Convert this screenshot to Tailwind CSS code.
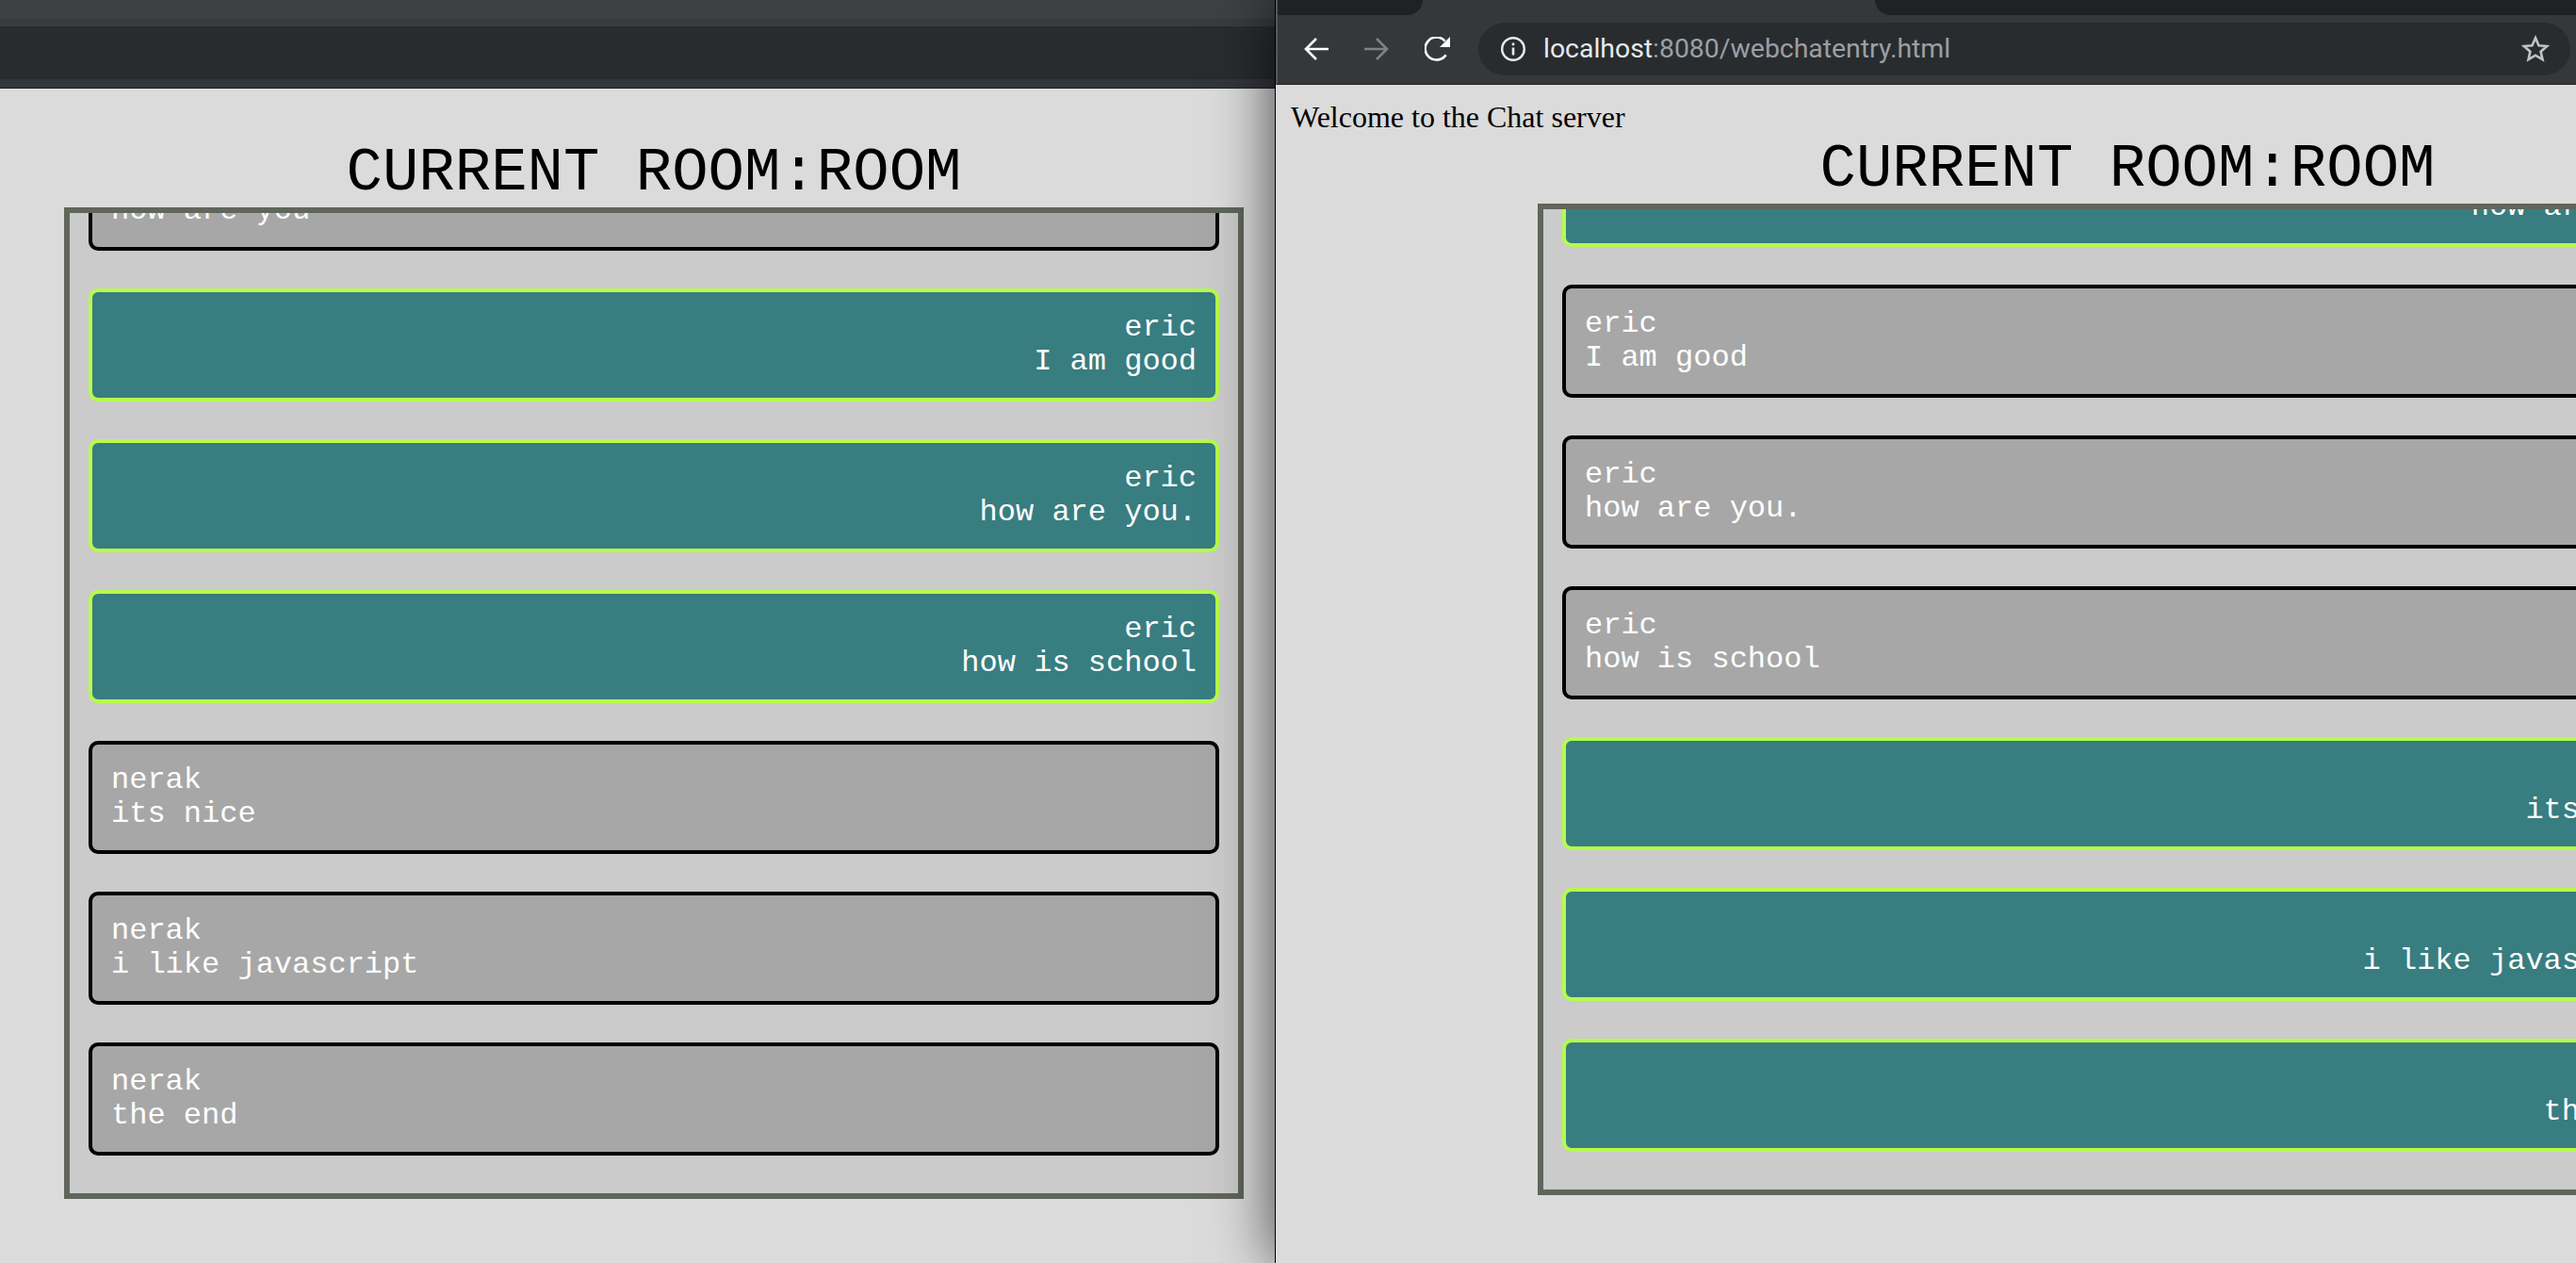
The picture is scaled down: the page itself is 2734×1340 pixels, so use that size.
<!DOCTYPE html>
<html>
  <head>
    <title>Chat</title>
    <script src="https://cdn.jsdelivr.net/npm/@tailwindcss/browser@4"></script>
  </head>
  <body class="bg-[#dbdbdb] overflow-hidden">
    <div class="flex w-[2734px] h-[1340px] overflow-hidden">
      <!-- left window -->
      <div class="w-[1353px] shrink-0 flex flex-col">
        <div class="h-[20px] bg-[#3d4144]"></div>
        <div class="h-[8px] bg-[#383c3f]"></div>
        <div class="h-[56px] bg-[#292c2f]"></div>
        <div class="h-[10px] bg-[#33363a] border-b border-[#202124]"></div>
        <div class="ml-[68px] w-[1252px] pt-[54px]">
          <h1 class="h-[72px] text-center text-[64px] leading-[72px] text-black font-['Liberation_Mono',monospace]">CURRENT ROOM:ROOM</h1>
          <div class="h-[1052px] border-[6px] border-[#60665c] bg-[#cbcbcb] overflow-hidden">
            <div class="flex flex-col gap-[40px] px-[20px] -mt-[80px] text-[32px] leading-[36px] text-white font-['Liberation_Mono',monospace]">
              <div class="h-[120px] p-[20px] border-4 border-black rounded-[10px] bg-[#a7a7a7]"><p>nerak</p><p>how are you</p></div>
              <div class="h-[120px] p-[20px] border-4 border-[#b6fb4c] rounded-[10px] bg-[#387d80] text-right"><p>eric</p><p>I am good</p></div>
              <div class="h-[120px] p-[20px] border-4 border-[#b6fb4c] rounded-[10px] bg-[#387d80] text-right"><p>eric</p><p>how are you.</p></div>
              <div class="h-[120px] p-[20px] border-4 border-[#b6fb4c] rounded-[10px] bg-[#387d80] text-right"><p>eric</p><p>how is school</p></div>
              <div class="h-[120px] p-[20px] border-4 border-black rounded-[10px] bg-[#a7a7a7]"><p>nerak</p><p>its nice</p></div>
              <div class="h-[120px] p-[20px] border-4 border-black rounded-[10px] bg-[#a7a7a7]"><p>nerak</p><p>i like javascript</p></div>
              <div class="h-[120px] p-[20px] border-4 border-black rounded-[10px] bg-[#a7a7a7]"><p>nerak</p><p>the end</p></div>
            </div>
          </div>
        </div>
      </div>

      <!-- right window -->
      <div class="relative z-10 flex-1 min-w-0 flex flex-col border-l border-black bg-[#dbdbdb] shadow-[0_0_60px_rgba(0,0,0,0.7)]">
        <div class="flex h-[16px] shrink-0 bg-[#35383b] border-l-2 border-[#55585b]">
          <div class="w-[154px] bg-[#202124] rounded-br-[16px]"></div>
          <div class="w-[480px]"></div>
          <div class="flex-1 bg-[#202124] rounded-bl-[16px]"></div>
        </div>
        <div class="h-[74px] shrink-0 flex items-start pt-[8px] pl-[28px] pr-[6px] bg-[#35383b] border-l-2 border-l-[#55585b] border-b border-b-[#202124]">
          <div class="h-[56px] flex items-center gap-[38px]">
            <svg class="w-[26px] h-[24px]" viewBox="0 0 26 24" fill="none" stroke="#ffffff" stroke-width="2.6"><path d="M26 12H2M13 1L2 12l11 11"/></svg>
            <svg class="w-[26px] h-[24px]" viewBox="0 0 26 24" fill="none" stroke="#808285" stroke-width="2.6"><path d="M0 12h24M13 1l11 11-11 11"/></svg>
            <svg class="w-[27px] h-[26px]" viewBox="0 0 27 26" fill="none"><path d="M22.6 19.2A12 12 0 1 1 21.6 4.6" stroke="#ffffff" stroke-width="2.6"/><path d="M27 0v11H16z" fill="#ffffff"/></svg>
          </div>
          <div class="ml-[30px] flex-1 h-[56px] flex items-center pl-[24px] pr-[22px] rounded-full bg-[#292c2f]">
            <svg class="w-[26px] h-[26px] shrink-0" viewBox="0 0 26 26" fill="none"><circle cx="13" cy="13" r="11.8" stroke="#e8eaed" stroke-width="2.4"/><path d="M11.7 11.5h2.6v8h-2.6zM11.7 6.6h2.6v2.6h-2.6z" fill="#e8eaed"/></svg>
            <span class="ml-[19px] text-[28.4px] leading-[38px] text-[#e8eaed] font-['Roboto',sans-serif]">localhost<span class="text-[#9aa0a6]">:8080/webchatentry.html</span></span>
            <svg class="ml-auto w-[30px] h-[30px] shrink-0" viewBox="0 0 30 30" fill="none"><path d="M15 3.2l3.5 8 8.6.8-6.5 5.700 1.900 8.500-7.500-4.500-7.500 4.500 1.900-8.500L2.900 12l8.600-.8z" stroke="#c0c4c8" stroke-width="2.6"/></svg>
          </div>
        </div>
        <p class="mt-[16px] ml-[16px] h-[38px] text-[32px] leading-[36px] text-black font-['Liberation_Serif',serif]">Welcome to the Chat server</p>
        <div class="ml-[278px] w-[1252px]">
          <h1 class="h-[72px] text-center text-[64px] leading-[72px] text-black font-['Liberation_Mono',monospace]">CURRENT ROOM:ROOM</h1>
          <div class="h-[1052px] border-[6px] border-[#60665c] bg-[#cbcbcb] overflow-hidden">
            <div class="flex flex-col gap-[40px] px-[20px] -mt-[80px] text-[32px] leading-[36px] text-white font-['Liberation_Mono',monospace]">
              <div class="h-[120px] p-[20px] border-4 border-[#b6fb4c] rounded-[10px] bg-[#387d80] text-right"><p>nerak</p><p>how are you</p></div>
              <div class="h-[120px] p-[20px] border-4 border-black rounded-[10px] bg-[#a7a7a7]"><p>eric</p><p>I am good</p></div>
              <div class="h-[120px] p-[20px] border-4 border-black rounded-[10px] bg-[#a7a7a7]"><p>eric</p><p>how are you.</p></div>
              <div class="h-[120px] p-[20px] border-4 border-black rounded-[10px] bg-[#a7a7a7]"><p>eric</p><p>how is school</p></div>
              <div class="h-[120px] p-[20px] border-4 border-[#b6fb4c] rounded-[10px] bg-[#387d80] text-right"><p>nerak</p><p>its nice</p></div>
              <div class="h-[120px] p-[20px] border-4 border-[#b6fb4c] rounded-[10px] bg-[#387d80] text-right"><p>nerak</p><p>i like javascript</p></div>
              <div class="h-[120px] p-[20px] border-4 border-[#b6fb4c] rounded-[10px] bg-[#387d80] text-right"><p>nerak</p><p>the end</p></div>
            </div>
          </div>
        </div>
      </div>
    </div>
  </body>
</html>
